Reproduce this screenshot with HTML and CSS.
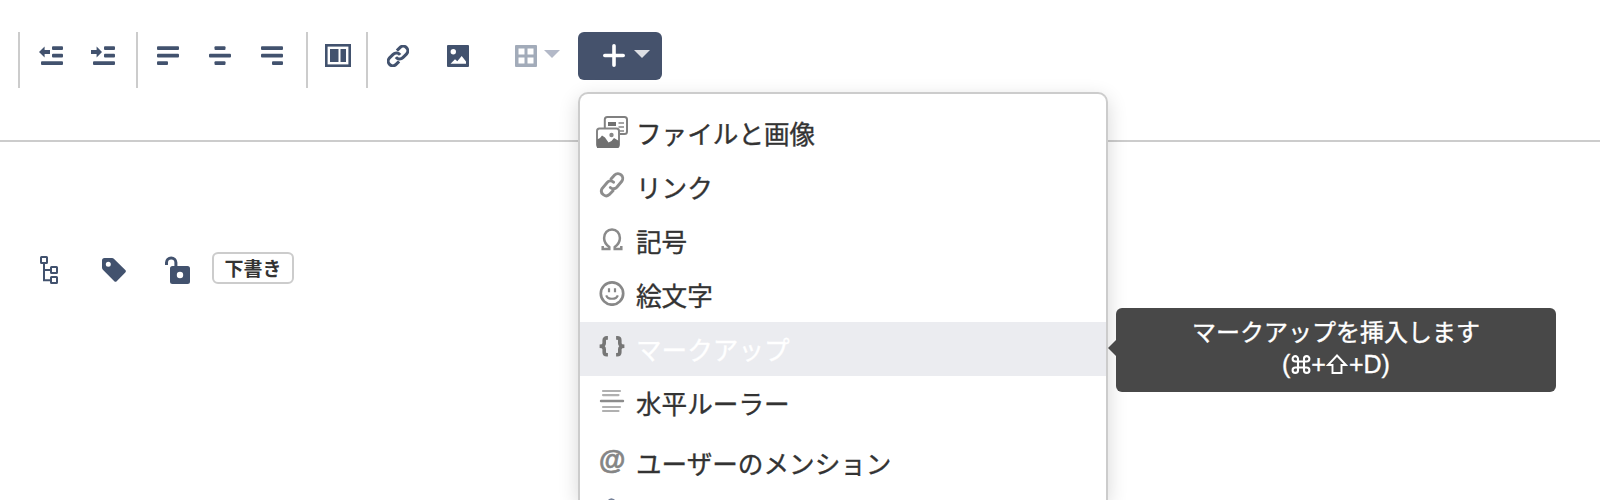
FILE: index.html
```html
<!DOCTYPE html>
<html lang="ja">
<head>
<meta charset="utf-8">
<title>エディター</title>
<link rel="stylesheet" href="styles.css">
</head>
<body>
<header class="toolbar">
  <div class="group indent">
    <svg width="24" height="20" viewBox="0 0 24 20"><g fill="currentColor"><rect x="13" y=".2" width="11" height="3.8" rx="1"/><rect x="13" y="7.7" width="11" height="3.8" rx="1"/><rect x="2" y="15.2" width="22" height="3.8" rx="1"/><path d="M0 6 5.600.5V4H11V8H5.600V11.500Z"/></g></svg>
    <svg width="24" height="20" viewBox="0 0 24 20"><g fill="currentColor"><rect x="13" y=".2" width="11" height="3.8" rx="1"/><rect x="13" y="7.7" width="11" height="3.8" rx="1"/><rect x="2" y="15.2" width="22" height="3.8" rx="1"/><path d="M11 6 5.600.5V4H0V8H5.600V11.500Z"/></g></svg>
  </div>
  <div class="group align">
    <svg width="22" height="20" viewBox="0 0 22 20"><g fill="currentColor"><rect y=".2" width="22" height="3.8" rx="1"/><rect y="7.7" width="22" height="3.8" rx="1"/><rect y="15.2" width="11" height="3.8" rx="1"/></g></svg>
    <svg width="22" height="20" viewBox="0 0 22 20"><g fill="currentColor"><rect x="5.500" y=".2" width="11" height="3.8" rx="1"/><rect y="7.7" width="22" height="3.8" rx="1"/><rect x="5.500" y="15.2" width="11" height="3.8" rx="1"/></g></svg>
    <svg width="22" height="20" viewBox="0 0 22 20"><g fill="currentColor"><rect y=".2" width="22" height="3.8" rx="1"/><rect y="7.7" width="22" height="3.8" rx="1"/><rect x="11" y="15.2" width="11" height="3.8" rx="1"/></g></svg>
  </div>
  <div class="group layout">
    <svg width="26" height="23" viewBox="0 0 26 23"><rect x="1.300" y="1.300" width="23.400" height="20.400" fill="none" stroke="currentColor" stroke-width="2.600"/><path fill="currentColor" d="M5 5h8.500v13H5zM15.500 5H21v13h-5.500z"/></svg>
  </div>
  <div class="group insert">
    <svg class="link" width="22" height="22" viewBox="0 0 24 24" fill="none" stroke="currentColor" stroke-width="3.300"><path d="M9.700 13.200a5 5 0 0 0 7.600.6l3.900-3.900a5 5 0 0 0-7.100-7.100l-3.300 3.300"/><path d="M14.300 10.800a5 5 0 0 0-7.600-.6l-3.900 3.900a5 5 0 0 0 7.100 7.100l3.300-3.300"/></svg>
    <svg class="picture" width="22" height="22" viewBox="0 0 22 22"><rect width="22" height="22" rx="1" fill="currentColor"/><circle cx="6.300" cy="6.700" r="2.700" fill="#fff"/><path fill="#fff" d="M3.500 18.800 8 14.300l2.300 2 4.400-5.300 4.300 5.400v2.400z"/></svg>
    <svg class="table" width="22" height="22" viewBox="0 0 22 22"><path fill="currentColor" fill-rule="evenodd" d="M1 0h20a1 1 0 0 1 1 1v20a1 1 0 0 1-1 1H1a1 1 0 0 1-1-1V1a1 1 0 0 1 1-1zM3.500 3.500v6h6v-6zM12.500 3.500v6h6v-6zM3.500 12.500v6h6v-6zM12.500 12.500v6h6v-6z"/></svg>
    <span class="caret"></span>
  </div>
  <div class="dropdown">
    <button class="add" type="button">
      <svg width="22" height="23" viewBox="0 0 22 23"><path d="M11 1.800v19.400M1.800 11.500h18.400" stroke="#fff" stroke-width="3.600" stroke-linecap="round"/></svg>
      <span class="caret light"></span>
    </button>
    <ul class="menu">
      <li class="item">
        <svg class="wide" width="32" height="32" viewBox="0 0 32 32"><rect x="8.800" y="1" width="22.200" height="17" rx="2.500" fill="#fff" stroke="#808080" stroke-width="2"/><rect x="12" y="6" width="8" height="4" fill="#707070"/><path d="M22.500 7H28M22.500 11H28M22.500 15H28" stroke="#888" stroke-width="1.700"/><rect x="1" y="12.500" width="22" height="18.500" rx="2.500" fill="#fff" stroke="#858585" stroke-width="2"/><circle cx="15.500" cy="19" r="2.200" fill="#888"/><path fill="#707070" d="M1 23.500 4 22l2-2.500 3 2 3.500 5 3-1.500L18 22l5 3v5.500q0 1.500-1.500 1.500H1z"/></svg>
        <span>ファイルと画像</span>
      </li>
      <li class="item">
        <svg width="26" height="26" viewBox="0 0 26 26" fill="none" stroke="#8d8d8d" stroke-width="2.900" stroke-linecap="round"><path d="M12 7 15.600 3a4.800 4.800 0 0 1 7.200 6.300l-5 6a4.500 4.500 0 0 1-6.500.2"/><path d="M14 18.700 10.200 22.700A4.800 4.800 0 0 1 3.100 16.500l5.100-6a4.500 4.500 0 0 1 6.300-.3"/></svg>
        <span>リンク</span>
      </li>
      <li class="item">
        <svg width="26" height="26" viewBox="0 0 26 26" fill="none" stroke="#8a8a8a" stroke-width="2.500"><path d="M3.700 20v3h6.600v-1.900C7.300 19 5.100 16 5.100 12.100 5.100 6.800 8.500 3.500 13 3.500s7.900 3.300 7.900 8.600c0 3.900-2.200 6.900-5.200 9V23h6.600v-3"/></svg>
        <span>記号</span>
      </li>
      <li class="item">
        <svg width="26" height="26" viewBox="0 0 26 26" fill="none" stroke="#888"><circle cx="13" cy="13.500" r="11.200" stroke-width="2.700"/><path d="M10 8.200v4M16 8.200v4" stroke-width="2.200"/><path d="M7.200 15.300c1.500 4.600 10.100 4.600 11.600 0" stroke-width="2.200"/></svg>
        <span>絵文字</span>
      </li>
      <li class="item active">
        <svg width="26" height="26" viewBox="0 0 26 26" fill="none" stroke="#767676" stroke-width="3.600"><path d="M8.900 3.900H7.800Q5.200 3.900 5.200 6.300v3Q5.200 12.300.6 12.300q4.600 0 4.600 3v3q0 2.400 2.600 2.400h1.100M17.100 3.900h1.100q2.600 0 2.600 2.400v3q0 3 4.600 3-4.600 0-4.600 3v3q0 2.400-2.600 2.400h-1.100"/></svg>
        <span>マークアップ</span>
        <div class="tooltip">マークアップを挿入します<br><span class="keys">(<svg class="key" width="20" height="19" viewBox="0 0 20 19" fill="none" stroke="#fff" stroke-width="2.100"><path d="M7 6.500h6v6H7zM7 6.500H4.300A2.700 2.700 0 1 1 7 3.800zM13 6.500V3.800a2.700 2.700 0 1 1 2.700 2.700zM13 12.500h2.700a2.700 2.700 0 1 1-2.700 2.700zM7 12.500v2.700a2.700 2.700 0 1 1-2.700-2.700z"/></svg>+<svg class="key" width="22" height="20" viewBox="0 0 22 20" fill="none" stroke="#fff" stroke-width="1.900"><path d="M11 1.500 20 11h-4.500v8h-9v-8H2z"/></svg>+D)</span></div>
      </li>
      <li class="item">
        <svg width="26" height="26" viewBox="0 0 26 26" stroke-linecap="round"><path d="M4 3h17M4 7.100h15.500M4 19h17M4 23h15.500" stroke="#b0b0b0" stroke-width="2.200"/><path d="M2 13h22" stroke="#8c8c8c" stroke-width="2.400"/></svg>
        <span>水平ルーラー</span>
      </li>
      <li class="item mention">
        <span class="at">@</span>
        <span>ユーザーのメンション</span>
      </li>
      <li class="item emblem">
        <svg width="26" height="26" viewBox="0 0 26 26"><path d="M9.500 1.200 12.400.2 15.500 1.200V3h4v22H3V3h6.500z" fill="#77839a"/></svg>
      </li>
    </ul>
  </div>
</header>
<main class="meta">
  <svg width="18" height="28" viewBox="0 0 18 28" fill="none" stroke="currentColor" stroke-width="2"><rect x="1" y="1" width="6" height="6" rx=".5"/><rect x="11" y="11" width="6" height="6" rx=".5"/><rect x="11" y="21" width="6" height="6" rx=".5"/><path d="M4 7v17.200h7M4 14h7"/></svg>
  <svg class="tag" width="24" height="24" viewBox="0 0 24 24"><path fill="currentColor" fill-rule="evenodd" d="M2.500 0H10q1.200 0 2.100.9L23.300 12.100q1.200 1.200 0 2.400l-8.600 8.700q-1.200 1.200-2.400 0L.9 11.700Q0 10.800 0 9.600V2.500Q0 0 2.500 0zM6.300 3.700a2.500 2.500 0 1 0 0 5 2.500 2.500 0 0 0 0-5z"/></svg>
  <svg class="lock" width="26" height="28" viewBox="0 0 26 28"><path fill="none" stroke="currentColor" stroke-width="3" d="M1.500 9V6.600a4.700 4.700 0 0 1 9.400 0V11"/><path fill="currentColor" fill-rule="evenodd" d="M7.500 10h15q2.500 0 2.500 2.500v13q0 2.500-2.500 2.500h-15Q5 28 5 25.500v-13Q5 10 7.500 10zM15 15.800a3.200 3.200 0 1 0 0 6.400 3.200 3.200 0 0 0 0-6.400z"/></svg>
  <span class="badge">下書き</span>
</main>
</body>
</html>
```
FILE: styles.css
```css
* { box-sizing: border-box; }
body {
  margin: 0;
  height: 500px;
  overflow: hidden;
  background: #fff;
  color: #333;
  font-family: "Noto Sans CJK JP", sans-serif;
}
svg { display: block; flex: none; }
.toolbar {
  display: flex;
  align-items: flex-start;
  height: 142px;
  padding: 32px 0 0 18px;
  border-bottom: 2px solid #ccc;
  color: #42526e;
}
.group {
  display: flex;
  height: 56px;
  border-left: 2px solid #ccc;
}
.indent { width: 118px; padding: 14px 0 0 19px; gap: 28px; }
.align { width: 170px; padding: 14px 0 0 19px; gap: 30px; }
.layout { width: 60px; padding: 12px 0 0 17px; }
.insert { width: 212px; padding: 13px 0 0 20px; }
.link { margin-left: -1px; }
.picture { margin-left: 38px; }
.table { margin-left: 46px; color: #a2abb9; }
.caret {
  width: 0;
  height: 0;
  margin: 5px 0 0 7px;
  border: 8px solid transparent;
  border-top-color: #b3b9c8;
  border-bottom-width: 0;
}
.caret.light { margin: 6px 0 0 9px; border-top-color: #dddfe4; }
.dropdown { position: relative; }
.add {
  display: flex;
  width: 84px;
  height: 48px;
  padding: 12px 0 0 25px;
  border: 0;
  border-radius: 6px;
  background: #45526c;
}
.menu {
  position: absolute;
  top: 60px;
  left: 0;
  width: 530px;
  height: 408px;
  margin: 0;
  padding: 12px 0 0;
  list-style: none;
  border: 2px solid #ccc;
  border-bottom: 0;
  border-radius: 10px 10px 0 0;
  background: #fff;
  box-shadow: 0 6px 20px rgba(0, 0, 0, .16);
  color: #333;
}
.item {
  position: relative;
  display: flex;
  height: 54px;
  padding-left: 19px;
  align-items: center;
  gap: 11px;
  font-size: 25.6px;
  line-height: 52px;
  -webkit-text-stroke: .35px currentColor;
}
.item > svg { margin-bottom: 4px; }
.item > .wide { margin: 0 -3px 3px -3px; }
.active { background: #ebecf0; color: #fff; }
.mention { height: 60px; padding-top: 6px; }
.at {
  width: 26px;
  margin-top: -5px;
  color: #858585;
  font: bold 27px/1 "Liberation Sans", sans-serif;
  -webkit-text-stroke: .7px #858585;
}
.emblem { height: 10px; overflow: hidden; align-items: flex-start; padding-top: 8px; }
.tooltip {
  position: absolute;
  left: 536px;
  top: -14px;
  width: 440px;
  height: 84px;
  padding-top: 7px;
  border-radius: 6px;
  background: #484848;
  color: #fff;
  font-size: 24px;
  line-height: 32px;
  text-align: center;
}
.tooltip::before {
  content: "";
  position: absolute;
  left: -8px;
  top: 32px;
  border: 8px solid transparent;
  border-left-width: 0;
  border-right-color: #484848;
}
.keys { font-family: "Liberation Sans", sans-serif; font-size: 25px; }
.key { display: inline-block; margin: 0 .5px; vertical-align: -1px; }
.meta {
  display: flex;
  align-items: flex-start;
  padding: 114px 0 0 40px;
  color: #42526e;
}
.tag { margin: 2px 0 0 44px; }
.lock { margin-left: 39px; }
.badge {
  width: 82px;
  height: 32px;
  margin: -4px 0 0 21px;
  border: 2px solid #ccc;
  border-radius: 6px;
  color: #333;
  font-size: 19px;
  font-weight: bold;
  line-height: 28px;
  text-align: center;
}
```
